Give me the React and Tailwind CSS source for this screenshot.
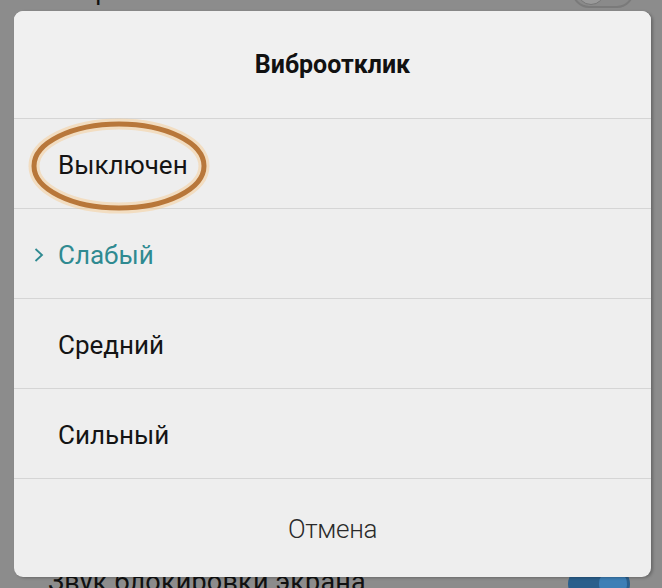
const options = [
  { label: 'Выключен' },
  { label: 'Слабый', active: true },
  { label: 'Средний' },
  { label: 'Сильный' },
]

function Toggle({ on }) {
  return (
    <div
      className={
        'flex h-[34px] w-[62px] items-center rounded-full px-[3px] ' +
        (on ? 'justify-end bg-[#2a5f8c]' : 'justify-start border-2 border-[#7a7a7a] bg-[#8a8a8a]')
      }
    >
      <div className={'h-[28px] w-[28px] rounded-full ' + (on ? 'bg-[#3d7fb6]' : 'bg-[#9a9a9a] border border-[#777]')} />
    </div>
  )
}

export default function App() {
  return (
    <div
      className="relative h-[588px] w-[662px] overflow-hidden bg-[#8c8c8c]"
      style={{ fontFamily: 'Roboto, "Noto Sans", sans-serif' }}
    >
      {/* dimmed settings list behind the dialog */}
      <div className="flex flex-col">
        <div className="-mt-[29px] flex h-[40px] items-center justify-between pl-[50px] pr-[28px]">
          <span className="text-[26px] text-[#111]">Виброотклик</span>
          <Toggle />
        </div>
        <div className="mt-[556px] flex h-[40px] items-start justify-between pl-[48px] pr-[32px]">
          <span className="text-[27px] leading-[30px] tracking-[0.2px] text-[#111]">Звук блокировки экрана</span>
          <Toggle on />
        </div>
      </div>

      {/* dialog */}
      <div className="absolute left-[14px] top-[11px] flex h-[566px] w-[637px] flex-col rounded-[9px] bg-[#eeeeee] shadow-[2px_1px_3px_rgba(0,0,0,0.25)]">
        <div className="flex h-[108px] items-center justify-center rounded-t-[9px] border-b border-[#d5d5d5] bg-[#f0f0f0]">
          <h2 className="text-[25px] font-bold text-[#111]">Виброотклик</h2>
        </div>
        {options.map((o) => (
          <div
            key={o.label}
            className={
              'flex h-[90px] items-center border-b border-[#d5d5d5] pt-[3px] ' + (o.active ? 'pl-[19px]' : 'pl-[44px]')
            }
          >
            {o.active && (
              <svg width="12" height="16" viewBox="0 0 12 16" className="mr-[13px]">
                <path d="M2.5 2 L9 8 L2.5 14" fill="none" stroke="#2f8a91" strokeWidth="1.8" />
              </svg>
            )}
            <span className={'text-[26px] ' + (o.active ? 'text-[#2f8a91]' : 'text-[#141414]')}>{o.label}</span>
          </div>
        ))}
        <div className="flex flex-1 items-center justify-center pt-[2px]">
          <span className="text-[26px] font-light tracking-[-0.3px] text-[#2a2a2a]">Отмена</span>
        </div>

        {/* hand-drawn highlight around the first option */}
        <svg className="pointer-events-none absolute left-0 top-0" width="637" height="566">
          <ellipse cx="105" cy="155" rx="85" ry="42" fill="none" stroke="#f6c88a" strokeOpacity="0.45" strokeWidth="11" />
          <ellipse cx="105" cy="155" rx="85" ry="42" fill="none" stroke="#b8773a" strokeWidth="5" />
        </svg>
      </div>
    </div>
  )
}
